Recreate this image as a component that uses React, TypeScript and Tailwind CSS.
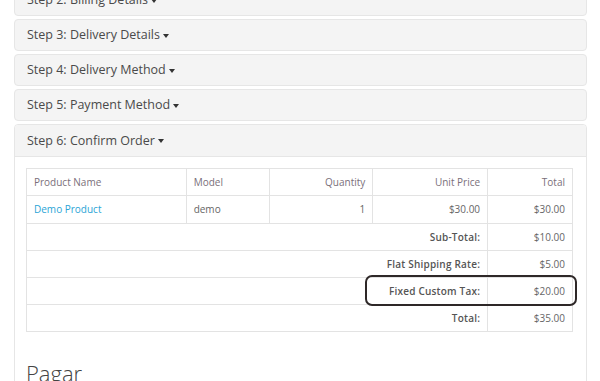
import React from "react";

const Caret = () => (
  <span className="inline-block ml-[3px] align-middle border-l-[3px] border-r-[3px] border-t-[4px] border-l-transparent border-r-transparent border-t-[#333]" />
);

const Panel = ({ title, className = "" }: { title: string; className?: string }) => (
  <div className={`h-[32px] rounded-[4px] border border-[#e6e6e6] bg-[#f4f4f4] flex items-center pl-[12px] pt-[1px] text-[12.5px] text-[#4a4a4a] ${className}`}>
    <span>{title}</span>
    <Caret />
  </div>
);

export default function App() {
  const cell = "border border-[#e3e3e3] px-[7px]";
  return (
    <div className="w-[600px] h-[381px] overflow-hidden bg-white" style={{ fontFamily: '"Open Sans", sans-serif' }}>
      <div className="pl-[14px] pr-[13px] flex flex-col gap-[3px] mt-[-16px]">
        <Panel title="Step 2: Billing Details" />
        <Panel title="Step 3: Delivery Details" />
        <Panel title="Step 4: Delivery Method" />
        <Panel title="Step 5: Payment Method" />
        <div className="rounded-[4px] border border-[#e6e6e6] bg-white">
          <div className="h-[32px] bg-[#f4f4f4] border-b border-[#e6e6e6] flex items-center pl-[12px] pt-[1px] text-[12.5px] text-[#4a4a4a] rounded-t-[4px]">
            <span>Step 6: Confirm Order</span>
            <Caret />
          </div>
          <div className="pl-[11px] pr-[13px] pt-[11px] pb-[40px]">
            <div className="relative">
              <table className="w-full border-collapse text-[10px] text-[#666]">
                <colgroup>
                  <col className="w-[160px]" />
                  <col className="w-[83px]" />
                  <col className="w-[104px]" />
                  <col className="w-[115px]" />
                  <col className="w-[85px]" />
                </colgroup>
                <tbody>
                  <tr className="h-[27px] text-[#7a6f7a]">
                    <td className={`${cell} text-left`}>Product Name</td>
                    <td className={`${cell} text-left`}>Model</td>
                    <td className={`${cell} text-right`}>Quantity</td>
                    <td className={`${cell} text-right`}>Unit Price</td>
                    <td className={`${cell} text-right`}>Total</td>
                  </tr>
                  <tr className="h-[28px]">
                    <td className={`${cell} text-left text-[#2ba4d6]`}>Demo Product</td>
                    <td className={`${cell} text-left`}>demo</td>
                    <td className={`${cell} text-right`}>1</td>
                    <td className={`${cell} text-right`}>$30.00</td>
                    <td className={`${cell} text-right`}>$30.00</td>
                  </tr>
                  {[
                    ["Sub-Total:", "$10.00"],
                    ["Flat Shipping Rate:", "$5.00"],
                    ["Fixed Custom Tax:", "$20.00"],
                    ["Total:", "$35.00"],
                  ].map(([l, v]) => (
                    <tr key={l} className="h-[27px]">
                      <td colSpan={4} className={`${cell} text-right font-semibold tracking-[0.2px] text-[#555]`}>{l}</td>
                      <td className={`${cell} text-right`}>{v}</td>
                    </tr>
                  ))}
                </tbody>
              </table>
              <div className="absolute left-[339px] top-[107px] w-[212px] h-[31px] border-2 border-[#2e2828] rounded-[7px]" />
            </div>
            <div className="pt-[30px] text-[22px] font-light text-[#444] leading-none">Pagar</div>
          </div>
        </div>
      </div>
    </div>
  );
}
